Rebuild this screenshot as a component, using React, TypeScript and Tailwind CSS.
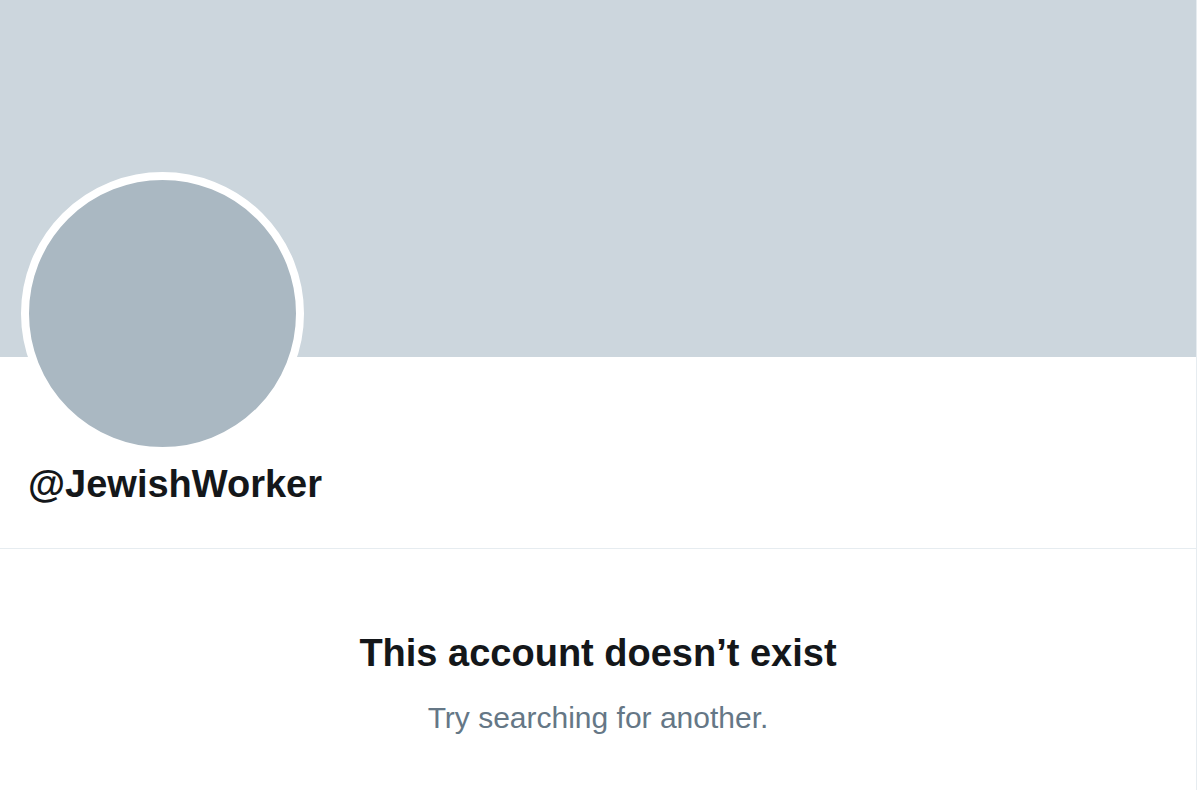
import React from "react";

export default function App() {
  return (
    <div
      className="w-[1200px] h-[790px] bg-white overflow-hidden"
      style={{ fontFamily: '"Liberation Sans", Arial, sans-serif' }}
    >
      <div className="w-[1197px] h-[790px] border-r border-[#E6ECF0] flex flex-col">
        <div className="h-[357px] w-full bg-[#CCD6DD] shrink-0" />
        <div className="border-b border-[#E6ECF0] pl-[21px] pb-[41px]">
          <div className="-mt-[185px] w-[283px] h-[283px] rounded-full border-[8px] border-white bg-[#AAB8C2]" />
          <div className="mt-[6px] pl-[7px] text-[38px] leading-[46px] font-bold text-[#14171A]">
            @JewishWorker
          </div>
        </div>
        <div className="flex flex-col items-center pt-[81px]">
          <div className="text-[38px] leading-[46px] font-bold text-[#14171A]">
            This account doesn’t exist
          </div>
          <div className="mt-[22px] text-[30px] leading-[40px] text-[#657786]">
            Try searching for another.
          </div>
        </div>
      </div>
    </div>
  );
}
